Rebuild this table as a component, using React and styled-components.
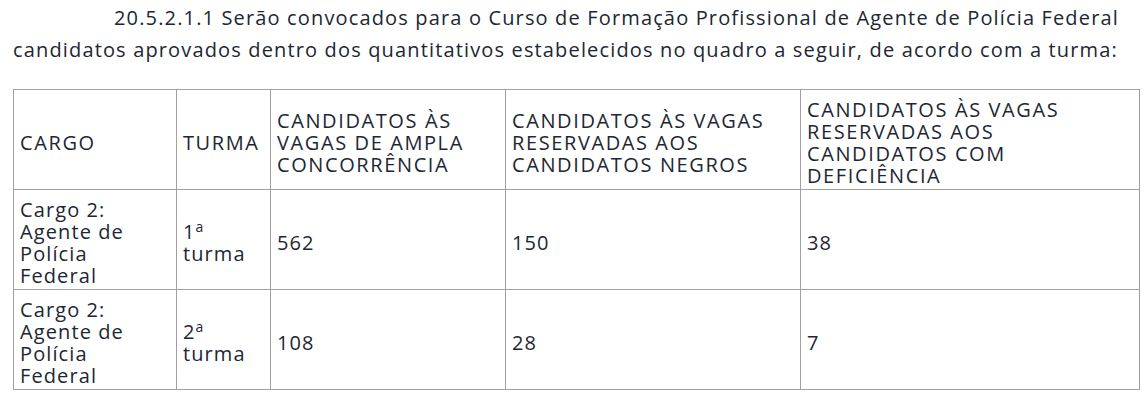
import React from "react";
import styled, { createGlobalStyle } from "styled-components";

const GlobalStyle = createGlobalStyle`
	body {
		margin: 0;
		background: #ffffff;
		font-family: "Open Sans", "Liberation Sans", sans-serif;
		color: #1c2733;
	}
`;

const Page = styled.main`
	padding: 0 10px 0 13px;
`;

const Paragraph = styled.p`
	margin: 0;
	padding-top: 2px;
	font-size: 20px;
	line-height: 32px;
	letter-spacing: 1.15px;
	text-indent: 101px;
`;

const Table = styled.table`
	margin-top: 23px;
	width: 1126px;
	border-collapse: collapse;
	table-layout: fixed;
	font-size: 20px;
	line-height: 22px;
`;

const Cell = styled.td`
	border: 1px solid #a0a0a0;
	padding: 7px 6px 1px;
	height: 100px;
	box-sizing: border-box;
	vertical-align: middle;
	letter-spacing: ${(p) => (p.$upper ? "1.6px" : "1.1px")};
	text-transform: ${(p) => (p.$upper ? "uppercase" : "none")};
`;

const Sup = styled.sup`
	font-size: 14px;
	line-height: 0;
	vertical-align: 7px;
`;

const widths = [163, 94, 235, 295, 339];

const header = [
	"CARGO",
	"TURMA",
	"CANDIDATOS ÀS VAGAS DE AMPLA CONCORRÊNCIA",
	"CANDIDATOS ÀS VAGAS RESERVADAS AOS CANDIDATOS NEGROS",
	"CANDIDATOS ÀS VAGAS RESERVADAS AOS CANDIDATOS COM DEFICIÊNCIA",
];

const rows = [
	{ turma: "1", ampla: "562", negros: "150", deficiencia: "38" },
	{ turma: "2", ampla: "108", negros: "28", deficiencia: "7" },
];

export default function App() {
	return (
		<>
			<GlobalStyle />
			<Page>
				<Paragraph>
					20.5.2.1.1 Serão convocados para o Curso de Formação Profissional de
					Agente de Polícia Federal candidatos aprovados dentro dos
					quantitativos estabelecidos no quadro a seguir, de acordo com a
					turma:
				</Paragraph>
				<Table>
					<colgroup>
						{widths.map((w, i) => (
							<col key={i} style={{ width: w }} />
						))}
					</colgroup>
					<tbody>
						<tr>
							{header.map((h) => (
								<Cell key={h} $upper>
									{h}
								</Cell>
							))}
						</tr>
						{rows.map((r) => (
							<tr key={r.turma}>
								<Cell>Cargo 2: Agente de Polícia Federal</Cell>
								<Cell>
									{r.turma}
									<Sup>a</Sup> turma
								</Cell>
								<Cell>{r.ampla}</Cell>
								<Cell>{r.negros}</Cell>
								<Cell>{r.deficiencia}</Cell>
							</tr>
						))}
					</tbody>
				</Table>
			</Page>
		</>
	);
}
